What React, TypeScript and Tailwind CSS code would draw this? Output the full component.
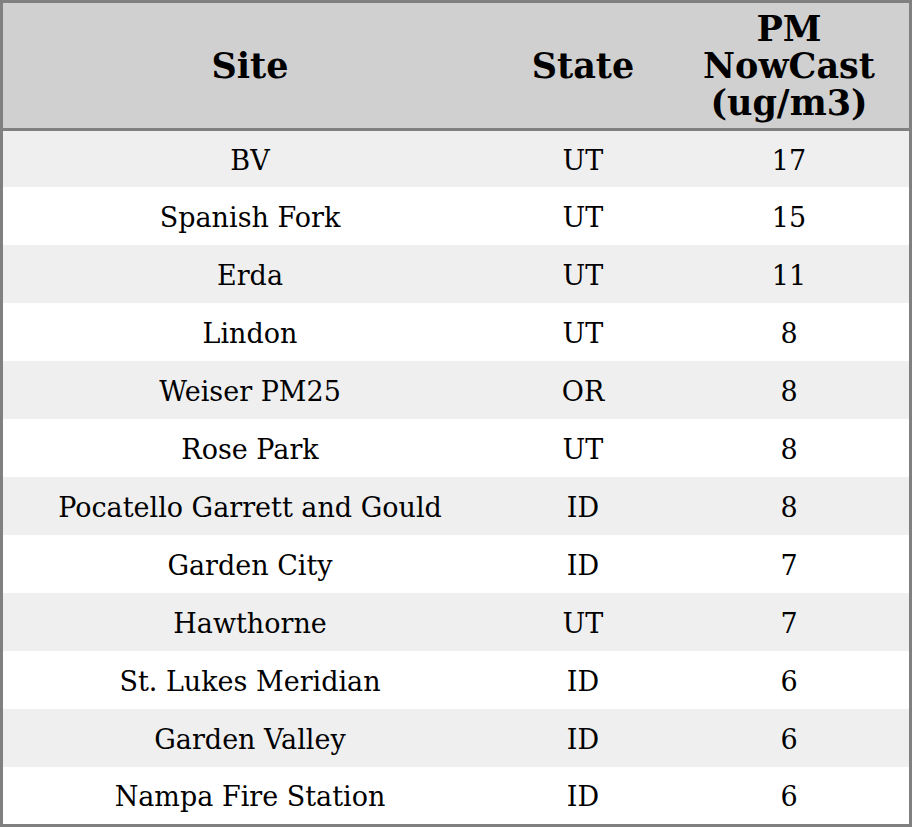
const rows: [string, string, string][] = [
  ["BV", "UT", "17"],
  ["Spanish Fork", "UT", "15"],
  ["Erda", "UT", "11"],
  ["Lindon", "UT", "8"],
  ["Weiser PM25", "OR", "8"],
  ["Rose Park", "UT", "8"],
  ["Pocatello Garrett and Gould", "ID", "8"],
  ["Garden City", "ID", "7"],
  ["Hawthorne", "UT", "7"],
  ["St. Lukes Meridian", "ID", "6"],
  ["Garden Valley", "ID", "6"],
  ["Nampa Fire Station", "ID", "6"],
];

export default function App() {
  return (
    <div className="w-[912px] h-[827px] bg-white font-['DejaVu_Serif',serif] text-black">
      <div className="w-[912px] h-[827px] border-[3px] border-[#808080] flex flex-col">
        <div className="grid grid-cols-[494px_172px_240px] h-[128px] bg-[#d0d0d0] border-b-[3px] border-[#808080] text-[35px] font-bold leading-[37px]">
          <div className="flex items-center justify-center">Site</div>
          <div className="flex items-center justify-center">State</div>
          <div className="flex items-center justify-center text-center">
            PM
            <br />
            NowCast
            <br />
            (ug/m3)
          </div>
        </div>
        {rows.map(([site, state, val], i) => (
          <div
            key={site}
            className={`grid grid-cols-[494px_172px_240px] pt-1 text-[27px] ${i === 0 ? "h-[56px]" : i === rows.length - 1 ? "h-[57px]" : "h-[58px]"} ${i % 2 === 0 ? "bg-[#efefef]" : "bg-white"}`}
          >
            <div className="flex items-center justify-center">{site}</div>
            <div className="flex items-center justify-center">{state}</div>
            <div className="flex items-center justify-center">{val}</div>
          </div>
        ))}
      </div>
    </div>
  );
}
